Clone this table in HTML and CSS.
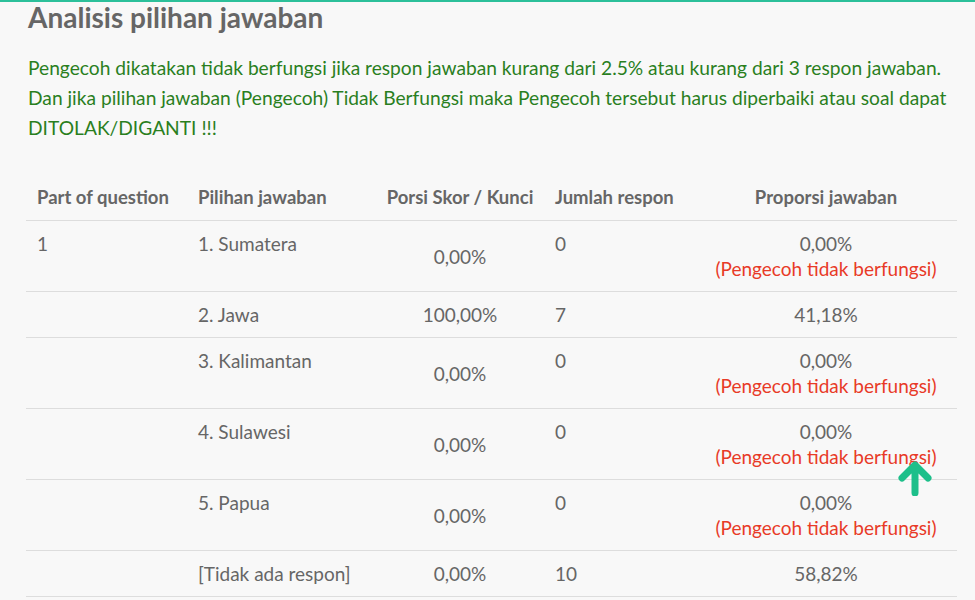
FILE: index.html
```html
<!DOCTYPE html>
<html>
<head>
<meta charset="utf-8">
<link rel="stylesheet" href="styles.css">
</head>
<body>
<div class="page">
  <h2 class="title">Analisis pilihan jawaban</h2>
  <p class="note">Pengecoh dikatakan tidak berfungsi jika respon jawaban kurang dari 2.5% atau kurang dari 3 respon jawaban.<br>Dan jika pilihan jawaban (Pengecoh) Tidak Berfungsi maka Pengecoh tersebut harus diperbaiki atau soal dapat DITOLAK/DIGANTI !!!</p>
  <table class="grid">
    <colgroup>
      <col class="c1"><col class="c2"><col class="c3"><col class="c4"><col class="c5">
    </colgroup>
    <thead>
      <tr><th>Part of question</th><th>Pilihan jawaban</th><th class="ctr">Porsi Skor / Kunci</th><th>Jumlah respon</th><th class="ctr">Proporsi jawaban</th></tr>
    </thead>
    <tbody>
      <tr><td>1</td><td>1. Sumatera</td><td class="ctr mid">0,00%</td><td>0</td><td class="ctr">0,00%<br><span class="bad">(Pengecoh tidak berfungsi)</span></td></tr>
      <tr><td></td><td>2. Jawa</td><td class="ctr mid">100,00%</td><td>7</td><td class="ctr">41,18%</td></tr>
      <tr><td></td><td>3. Kalimantan</td><td class="ctr mid">0,00%</td><td>0</td><td class="ctr">0,00%<br><span class="bad">(Pengecoh tidak berfungsi)</span></td></tr>
      <tr><td></td><td>4. Sulawesi</td><td class="ctr mid">0,00%</td><td>0</td><td class="ctr">0,00%<br><span class="bad">(Pengecoh tidak berfungsi)<svg class="arrow" width="38" height="36" viewBox="0 0 38 36"><path d="M19 33 V8 M6 18 L19 5 L32 18" fill="none" stroke="#1dbf8a" stroke-width="7" stroke-linecap="round" stroke-linejoin="round"/></svg></span></td></tr>
      <tr><td></td><td>5. Papua</td><td class="ctr mid">0,00%</td><td>0</td><td class="ctr">0,00%<br><span class="bad">(Pengecoh tidak berfungsi)</span></td></tr>
      <tr><td></td><td>[Tidak ada respon]</td><td class="ctr mid">0,00%</td><td>10</td><td class="ctr">58,82%</td></tr>
    </tbody>
  </table>
</div>
</body>
</html>
```
FILE: styles.css
```css
html, body { margin: 0; padding: 0; }
body {
  background: #f8f8f8;
  font-family: Lato, "Open Sans", sans-serif;
  color: #666;
  border-top: 2px solid #2cc09a;
  height: 598px;
  overflow: hidden;
}
.page { padding: 0 18px 0 26px; }
.title {
  margin: 0;
  padding-left: 2px;
  font-size: 28px;
  line-height: 30px;
  font-weight: 700;
  color: #666;
}
.note {
  margin: 21px 0 0 2px;
  font-size: 19.2px;
  line-height: 30px;
  color: #2a7f1e;
}
.grid {
  margin-top: 32px;
  width: 931px;
  border-collapse: collapse;
  table-layout: fixed;
  font-size: 19px;
}
.c1 { width: 161px; }
.c2 { width: 189px; }
.c3 { width: 168px; }
.c4 { width: 151px; }
.c5 { width: 262px; }
th {
  text-align: left;
  font-weight: 700;
  font-size: 18.5px;
  padding: 10px 11px 11px;
  line-height: 24px;
  color: #666;
  white-space: nowrap;
}
th.ctr { padding-left: 4px; padding-right: 4px; }
td {
  vertical-align: top;
  padding: 10px 11px 10px;
  line-height: 25px;
  border-top: 1px solid #ddd;
}
tbody tr:last-child td { border-bottom: 1px solid #ddd; }
.ctr { text-align: center; }
.mid { vertical-align: middle; }
.bad { color: #e83a27; position: relative; }
.arrow { position: absolute; right: 3px; top: 15px; }
```
